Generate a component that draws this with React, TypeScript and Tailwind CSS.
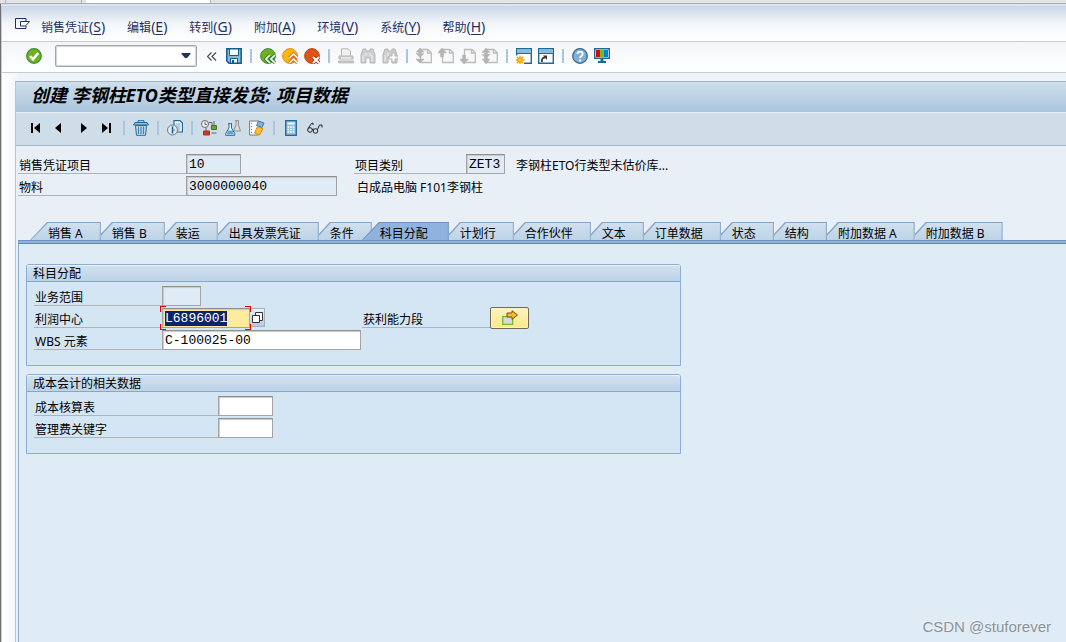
import { useEffect, useRef } from 'react';
import type { ReactNode } from 'react';
import { clsx } from 'clsx';

// ────────────────────────────────────────────
// Data
// ────────────────────────────────────────────

const menus = [
  { label: '销售凭证', hotkey: 'S' },
  { label: '编辑', hotkey: 'E' },
  { label: '转到', hotkey: 'G' },
  { label: '附加', hotkey: 'A' },
  { label: '环境', hotkey: 'V' },
  { label: '系统', hotkey: 'Y' },
  { label: '帮助', hotkey: 'H' },
];

const tabs = [
  '销售 A', '销售 B', '装运', '出具发票凭证', '条件', '科目分配', '计划行',
  '合作伙伴', '文本', '订单数据', '状态', '结构', '附加数据 A', '附加数据 B',
];

const activeTab = '科目分配';

// ────────────────────────────────────────────
// Icons
// ────────────────────────────────────────────

function Icon({ children }: { children: ReactNode }) {
  return (
    <svg width="16" height="16" viewBox="0 0 16 16" fill="none" className="block shrink-0" aria-hidden="true">
      {children}
    </svg>
  );
}

const MenuIcon = (
  <Icon>
    <path d="M11 4V1.5H.5v10H11V9" stroke="#1f3264" />
    <path d="M5.500 4.500h9l-4 4.500h-5z" stroke="#1f3264" fill="#fff" />
  </Icon>
);

const CheckIcon = (
  <Icon>
    <circle cx="8" cy="8" r="7.300" fill="#6fb01e" stroke="#3f8a3c" strokeWidth="1.200" />
    <path d="M4 8l3 3.300L12.200 5" stroke="#fff" strokeWidth="2.600" />
  </Icon>
);

const SaveIcon = (
  <Icon>
    <path d="M.8.8h14.400v14.400H3L.8 13z" fill="#8fb6d6" stroke="#0b5f8f" strokeWidth="1.500" />
    <path d="M3.500 1h9v6.500h-9z" fill="#fff" stroke="#0b5f8f" />
    <path d="M4.500 10.500h7V15h-7z" fill="#fff" stroke="#0b5f8f" />
    <path d="M6 12h2v3H6z" fill="#0b5f8f" />
  </Icon>
);

const BackIcon = (
  <Icon>
    <circle cx="8" cy="8" r="7.400" fill="#6fb01e" stroke="#3f8a3c" />
    <path d="M10 7L6 11l4 4M15 7l-4 4 4 4" stroke="#287a32" strokeWidth="3.200" />
    <path d="M10 7L6 11l4 4M15 7l-4 4 4 4" stroke="#fff" strokeWidth="1.700" />
  </Icon>
);

const ExitIcon = (
  <Icon>
    <circle cx="8" cy="8" r="7.400" fill="#fbb615" stroke="#e58a10" />
    <path d="M7.500 10l4-4 4 4M7.500 15l4-4 4 4" stroke="#d8560c" strokeWidth="3.200" />
    <path d="M7.500 10l4-4 4 4M7.500 15l4-4 4 4" stroke="#fff" strokeWidth="1.700" />
  </Icon>
);

const CancelIcon = (
  <Icon>
    <circle cx="8" cy="8" r="7.400" fill="#dd5318" stroke="#b84a1c" />
    <path d="M9 9l6 6M15 9l-6 6" stroke="#b22d0a" strokeWidth="3.800" />
    <path d="M9 9l6 6M15 9l-6 6" stroke="#fff" strokeWidth="2.100" />
  </Icon>
);

const PrintIcon = (
  <Icon>
    <path d="M3.500 8V.8H10L12.500 3v5" fill="#f1f1f1" stroke="#b5b5b5" />
    <path d="M1 8h14v3H1zM.5 13h15v1.800H.5z" fill="#cdcdcd" stroke="#b5b5b5" />
    <path d="M3 10h10" stroke="#fff" />
  </Icon>
);

const binoculars = 'M3 1h3v2h4V1h3l2 6v8h-5v-5H6v5H1V7z';

const FindIcon = (
  <Icon>
    <path d={binoculars} fill="#cfcfcf" stroke="#b5b5b5" />
    <path d="M3 7v6M12 7v6M6 5v3M10 5v3" stroke="#f2f2f2" />
  </Icon>
);

const FindNextIcon = (
  <Icon>
    <path d={binoculars} fill="#cfcfcf" stroke="#b5b5b5" />
    <path d="M3 7v6M6 5v3" stroke="#f2f2f2" />
    <path d="M10 5h3v3h3v3h-3v3h-3v-3H7V8h3z" fill="#fafafa" stroke="#b5b5b5" />
  </Icon>
);

function PageIcon({ arrow }: { arrow: string }) {
  return (
    <Icon>
      <path d="M4.500 1.500H12l3.300 3.300v9.700H4.500z" fill="#f7f7f7" stroke="#bcbcbc" strokeWidth="1.300" />
      <path d="M11.500 1.500V5h3.500" stroke="#bcbcbc" strokeWidth="1.300" />
      <path d={arrow} fill="#b4b4b4" stroke="#b4b4b4" strokeWidth=".5" />
    </Icon>
  );
}

const NewSessionIcon = (
  <Icon>
    <path d="M.7 .7h14.600v14.600H.7z" fill="#fff" stroke="#22698f" strokeWidth="1.400" />
    <path d="M1.400 1.400h13.200V5H1.400z" fill="#8cb8da" />
    <path d="M1 5.500h14" stroke="#22698f" />
    <path d="M0 7.500h8V16H0z" fill="#fff" />
    <path d="M4 7.500v9M-.5 12h9M.8 8.800l6.400 6.400M7.200 8.800L.8 15.200" stroke="#f19c0d" strokeWidth="1.300" />
    <circle cx="4" cy="12" r="2.300" fill="#ffc71a" stroke="#ef980c" />
  </Icon>
);

const ShortcutIcon = (
  <Icon>
    <path d="M.7 .7h14.600v14.600H.7z" fill="#fff" stroke="#22698f" strokeWidth="1.400" />
    <path d="M1.400 1.400h13.200V5H1.400z" fill="#8cb8da" />
    <path d="M1 5.500h14" stroke="#22698f" />
    <path d="M4 14c-.5-3 .5-4.500 3-4.500" stroke="#333" strokeWidth="1.800" />
    <path d="M5 7.500h4V12z" fill="#333" />
  </Icon>
);

const HelpIcon = (
  <Icon>
    <circle cx="8" cy="8" r="7.300" fill="#82add4" stroke="#2c6690" strokeWidth="1.200" />
    <path d="M5.500 6c0-3.200 5.200-3 5.200 0C10.700 8 8 8 8 10" stroke="#fff" strokeWidth="1.800" />
    <path d="M7 11.500h2v2H7z" fill="#fff" />
  </Icon>
);

const LayoutIcon = (
  <Icon>
    <path d="M.7 .7h14.600v9.600H.7z" fill="#fff" stroke="#22698f" strokeWidth="1.400" />
    <path d="M2 2h4v7H2z" fill="#d20a0a" />
    <path d="M6 2h4v7H6z" fill="#76b82a" />
    <path d="M10 2h4v7h-4z" fill="#0a7fd0" />
    <path d="M6.500 11h3v2h2.500v2H4v-2h2.500z" fill="#22698f" />
  </Icon>
);

const FirstIcon = (
  <Icon>
    <path d="M4 3h2v10H4zM13 3v10L7 8z" fill="#000" />
  </Icon>
);

const PrevIcon = (
  <Icon>
    <path d="M10 3v10L4 8z" fill="#000" />
  </Icon>
);

const NextIcon = (
  <Icon>
    <path d="M6 3v10l6-5z" fill="#000" />
  </Icon>
);

const LastIcon = (
  <Icon>
    <path d="M10 3h2v10h-2zM3 3v10l6-5z" fill="#000" />
  </Icon>
);

const TrashIcon = (
  <Icon>
    <path d="M5 2V.7h6V2" stroke="#1f6c99" />
    <path d="M2 2.500h12l1.500 2.500H.5z" fill="#8fbbdc" stroke="#1f6c99" />
    <path d="M2.500 5.500h11L12.500 15.300h-9z" fill="#c7dcec" stroke="#1f6c99" />
    <path d="M5.500 6.500v7.500M8 6.500v7.500M10.500 6.500v7.500" stroke="#3a82b0" strokeWidth="1.200" />
  </Icon>
);

const HistoryIcon = (
  <Icon>
    <path d="M7 .6h6l2.400 2.400v9H7z" fill="#fff" stroke="#1d6a99" strokeWidth="1.200" />
    <path d="M8.500 4h5M8.500 6h5M8.500 8h5M8.500 10h5" stroke="#6ba3cc" />
    <circle cx="5.500" cy="10" r="5" fill="#e3e9ec" stroke="#6f7a80" />
    <path d="M5.500 6.500v7" stroke="#1d5a88" strokeWidth="1.500" />
    <path d="M5.500 10H8" stroke="#6f7a80" />
  </Icon>
);

const SchedulingIcon = (
  <Icon>
    <circle cx="4" cy="4" r="3.500" fill="#f4f4f4" stroke="#666" />
    <path d="M4 2v2.500H6M8 2.500h3V5M13 1v4M5 8v3" stroke="#666" />
    <path d="M10.500 5.500h5v4h-5z" fill="#63a820" stroke="#4d6e2e" />
    <path d="M2.500 11h6v4h-6z" fill="#d8341c" stroke="#9a3b27" />
    <path d="M10.500 13h5" stroke="#666" />
  </Icon>
);

const FlasksIcon = (
  <Icon>
    <path d="M10 .7h4M11 1v4L8.500 11h7L13.500 5V1" fill="#dadada" stroke="#8b8f92" />
    <path d="M3 3.700h4M4 4v4L.7 13.500v1.800h9v-1.800L6.500 8V4" fill="#fff" stroke="#1d6a99" />
    <path d="M3 10.500h4.500L9 14.500H1.500z" fill="#5fa3d4" />
  </Icon>
);

const EditNotesIcon = (
  <Icon>
    <path d="M.6 1h9v14h-9z" fill="#fff" stroke="#777" />
    <path d="M2.500 3v11" stroke="#777" strokeDasharray="1 2" />
    <path d="M9.500 1l5.500 2-2 4.500-5.500-2z" fill="#7fb2da" stroke="#3b7db0" />
    <path d="M8.500 6.500l5.500 2-3.500 6.500-5-2z" fill="#ffc02a" stroke="#d88b12" />
  </Icon>
);

const CalculatorIcon = (
  <Icon>
    <path d="M2.700 .7h10.600v14.600H2.700z" fill="#8fbbdc" stroke="#1d6a99" strokeWidth="1.300" />
    <path d="M4.500 2.500h7v2h-7z" fill="#fff" />
    <path d="M4.500 7h7M4.500 9.500h7M4.500 12h7" stroke="#fff" strokeWidth="1.500" strokeDasharray="1.800 .8" />
  </Icon>
);

const GlassesIcon = (
  <Icon>
    <circle cx="3" cy="10" r="2.300" stroke="#222" />
    <circle cx="8.500" cy="11" r="2.300" stroke="#222" />
    <path d="M1 8.500L4.500 3.500 6 3v2M5 9.500l1.500-.5M10.500 9.500l2-4.500h2.500v2.500" stroke="#222" />
  </Icon>
);

// ────────────────────────────────────────────
// Small building blocks
// ────────────────────────────────────────────

function ToolButton({ label, children, disabled }: { label: string; children: ReactNode; disabled?: boolean }) {
  return (
    <button type="button" aria-label={label} disabled={disabled} className="size-4 shrink-0">
      {children}
    </button>
  );
}

function Separator() {
  return <span className="h-3.5 w-0.5 shrink-0 bg-[#a9c6e0]" />;
}

const fieldBox =
  'h-5 shrink-0 rounded-none border border-[#a3a3a3] border-t-[#8f8f8f] px-[2px] font-[Liberation_Mono,monospace] text-[13px] leading-4 text-black outline-none shadow-[inset_1px_1px_1px_#c8c8c8]';

function Label({ htmlFor, className, children }: { htmlFor: string; className: string; children: ReactNode }) {
  return (
    <label
      htmlFor={htmlFor}
      className={clsx('flex h-5 shrink-0 items-center border-b border-[#b3b3b3] pt-1 pl-px leading-[15px]', className)}
    >
      {children}
    </label>
  );
}

function Group({ title, children }: { title: string; children: ReactNode }) {
  return (
    <section className="max-w-[655px] rounded-t-[3px] border border-[#8fadd0] bg-[#d4e5f3]">
      <h2 className="flex h-[17px] items-center rounded-t-[2px] border-b border-[#86a5cb] bg-linear-to-b from-[#d3e1ef] to-[#bcd3e9] pt-0.5 pl-1.5 leading-[14px] shadow-[inset_0_1px_0_#eaf2f9]">
        {title}
      </h2>
      <div className="flex flex-col gap-0.5 px-[7px] pt-1 pb-[15px]">{children}</div>
    </section>
  );
}

// ────────────────────────────────────────────
// Menu bar and system toolbar
// ────────────────────────────────────────────

function MenuBar() {
  return (
    <nav className="flex h-9 items-center gap-[22px] border-b border-[#c3ccd6] bg-linear-to-b from-[#c9d6e7] via-[#f3f6fa] via-50% to-white pt-2 pl-[13px] text-[#1f3264]">
      <div className="flex items-center gap-2.5">
        <button type="button" aria-label="菜单" className="mb-1.5">{MenuIcon}</button>
        <MenuEntry {...menus[0]} />
      </div>
      {menus.slice(1).map((menu) => (
        <MenuEntry key={menu.hotkey} {...menu} />
      ))}
    </nav>
  );
}

function MenuEntry({ label, hotkey }: { label: string; hotkey: string }) {
  return (
    <button type="button" className="shrink-0 leading-4 whitespace-nowrap">
      {label}
      <span className="text-sm leading-4">
        (<span className="underline underline-offset-2">{hotkey}</span>)
      </span>
    </button>
  );
}

function SystemToolbar() {
  return (
    <div className="flex h-[31px] items-center gap-1.5 border-b border-[#c3ccd6] bg-linear-to-b from-[#f3f5f9] to-white pb-0.5 pl-6">
      <ToolButton label="回车">{CheckIcon}</ToolButton>
      <div className="relative ml-[7px]">
        <input
          aria-label="命令"
          className="block h-[22px] w-[142px] rounded-xs border border-[#a3a5a9] bg-white px-1 pr-5 shadow-[inset_0_0_1px_1px_#d2d4d8] outline-none"
        />
        <button type="button" aria-label="命令历史" className="absolute top-2 right-1.5">
          <svg width="10" height="6" viewBox="0 0 10 6" className="block" aria-hidden="true">
            <path d="M.5 0h9v1L6 5H4L.5 1z" fill="#1f3264" />
          </svg>
        </button>
      </div>
      <button type="button" aria-label="收起" className="ml-1 mr-[3px] w-[10px] shrink-0">
        <svg width="10" height="9" viewBox="0 0 10 9" fill="none" className="block" aria-hidden="true">
          <path d="M4.500 .5l-4 4 4 4M9 .5l-4 4 4 4" stroke="#4a4a4a" strokeWidth="1.200" />
        </svg>
      </button>
      <div className="flex items-center gap-2">
        <ToolButton label="保存">{SaveIcon}</ToolButton>
        <Separator />
        <div className="flex gap-1.5">
          <ToolButton label="返回">{BackIcon}</ToolButton>
          <ToolButton label="退出">{ExitIcon}</ToolButton>
          <ToolButton label="取消">{CancelIcon}</ToolButton>
        </div>
        <Separator />
        <div className="flex gap-1.5">
          <ToolButton label="打印" disabled>{PrintIcon}</ToolButton>
          <ToolButton label="查找" disabled>{FindIcon}</ToolButton>
          <ToolButton label="查找下一个" disabled>{FindNextIcon}</ToolButton>
        </div>
        <Separator />
        <div className="flex gap-1.5">
          <ToolButton label="首页" disabled>
            <PageIcon arrow="M4 0l4 4H5.500v1.500H8L4 9.500 0 5.500h2.500V4H0zM0 11h8L4 15z" />
          </ToolButton>
          <ToolButton label="上一页" disabled>
            <PageIcon arrow="M4 0l4.500 5H5.500v4h-3V5H-.5z" />
          </ToolButton>
          <ToolButton label="下一页" disabled>
            <PageIcon arrow="M4 16l4.500-5H5.500V7h-3v4H-.5z" />
          </ToolButton>
          <ToolButton label="末页" disabled>
            <PageIcon arrow="M4 0l4 4.500H0zM2.500 5h3v1.500H8L5.500 9v2H8l-4 5-4-5h2.500V9L0 6.500h2.500z" />
          </ToolButton>
        </div>
        <Separator />
        <div className="flex gap-1.5">
          <ToolButton label="新会话">{NewSessionIcon}</ToolButton>
          <ToolButton label="快捷方式">{ShortcutIcon}</ToolButton>
        </div>
        <Separator />
        <div className="flex gap-1.5">
          <ToolButton label="帮助">{HelpIcon}</ToolButton>
          <ToolButton label="布局">{LayoutIcon}</ToolButton>
        </div>
      </div>
    </div>
  );
}

// ────────────────────────────────────────────
// Transaction title and application toolbar
// ────────────────────────────────────────────

function TitleBar() {
  return (
    <header>
      <h1 className="flex h-[31px] items-center border-t border-[#9fb4c9] bg-linear-to-b from-[#cfdfeb] to-[#abc5de] pb-1 pl-[15px] text-lg leading-6 font-bold whitespace-nowrap text-black italic">
        创建 李钢柱ETO类型直接发货: 项目数据
      </h1>
      <div className="flex h-[34px] items-center gap-2 border-t border-b border-t-[#e3edf5] border-b-[#a3b6cb] bg-[#cfdde8] pb-0.5 pl-[11px]">
        <ToolButton label="第一项">{FirstIcon}</ToolButton>
        <ToolButton label="上一项">{PrevIcon}</ToolButton>
        <ToolButton label="下一项">{NextIcon}</ToolButton>
        <ToolButton label="最后一项">{LastIcon}</ToolButton>
        <Separator />
        <ToolButton label="删除">{TrashIcon}</ToolButton>
        <Separator />
        <ToolButton label="凭证流">{HistoryIcon}</ToolButton>
        <Separator />
        <ToolButton label="计划行">{SchedulingIcon}</ToolButton>
        <ToolButton label="配置">{FlasksIcon}</ToolButton>
        <ToolButton label="编辑备注">{EditNotesIcon}</ToolButton>
        <Separator />
        <ToolButton label="定价">{CalculatorIcon}</ToolButton>
        <ToolButton label="显示">{GlassesIcon}</ToolButton>
      </div>
    </header>
  );
}

function ItemHeader() {
  return (
    <div className="flex flex-col gap-0.5 pt-2 pl-0.5">
      <div className="flex">
        <Label htmlFor="item" className="w-[168px]">销售凭证项目</Label>
        <input id="item" readOnly defaultValue="10" className={clsx(fieldBox, 'w-[55px] bg-[#dfebf5]')} />
        <Label htmlFor="category" className="ml-[113px] w-[112px]">项目类别</Label>
        <input id="category" readOnly defaultValue="ZET3" className={clsx(fieldBox, 'w-[39px] bg-[#dfebf5]')} />
        <span className="ml-[11px] pt-1 leading-4 whitespace-nowrap">李钢柱ETO行类型未估价库...</span>
      </div>
      <div className="flex">
        <Label htmlFor="material" className="w-[168px]">物料</Label>
        <input id="material" readOnly defaultValue="3000000040" className={clsx(fieldBox, 'w-[151px] bg-[#dfebf5]')} />
        <span className="ml-5 pt-1 leading-4 whitespace-nowrap">白成品电脑 F101李钢柱</span>
      </div>
    </div>
  );
}

// ────────────────────────────────────────────
// Tab strip
// ────────────────────────────────────────────

function Tab({ label, first }: { label: string; first: boolean }) {
  const active = label === activeTab;
  const wide = first || active;

  return (
    <button
      type="button"
      role="tab"
      aria-selected={active}
      className={clsx(
        'h-[18px] shrink-0 pt-px pr-px',
        wide
          ? '[clip-path:polygon(0_100%,17px_0,100%_0,100%_100%)]'
          : '[clip-path:polygon(0_12px,11px_0,100%_0,100%_100%,0_100%)]',
        active ? 'z-10 -ml-2.5 bg-[#6f94c2]' : 'bg-[#86a5c4]',
      )}
    >
      <span
        className={clsx(
          'flex h-[17px] items-center pt-[5px] leading-3 whitespace-nowrap',
          wide
            ? '[clip-path:polygon(1px_100%,18px_0,100%_0,100%_100%)]'
            : '[clip-path:polygon(0_13px,12px_0,100%_0,100%_100%,0_100%)]',
          wide ? 'pl-[18px]' : 'pl-[11px]',
          active ? 'bg-[#8fb3dd] pr-5' : 'bg-linear-to-b from-[#d0e0ef] to-[#bdd3e7] pr-[17px]',
        )}
      >
        {label}
      </span>
    </button>
  );
}

function TabStrip() {
  return (
    <div role="tablist" className="mt-[26px] flex pl-3">
      {tabs.map((tab, index) => (
        <Tab key={tab} label={tab} first={index === 0} />
      ))}
    </div>
  );
}

// ────────────────────────────────────────────
// Account assignment form
// ────────────────────────────────────────────

function ProfitCenterField() {
  const ref = useRef<HTMLInputElement>(null);

  useEffect(() => {
    ref.current?.focus();
    ref.current?.select();
  }, []);

  return (
    <div className="relative flex">
      <input
        ref={ref}
        id="profit-center"
        defaultValue="L6896001"
        className={clsx(fieldBox, 'w-[88px] bg-[#ffeb9c] selection:bg-[#0a246a] selection:text-white')}
      />
      <button
        type="button"
        aria-label="搜索帮助"
        className="flex h-[19px] w-[15px] items-center justify-center border border-l-0 border-[#a5afba] bg-linear-to-b from-[#eaf1f8] to-[#b3cae4]"
      >
        <svg width="11" height="12" viewBox="0 0 11 12" className="block" aria-hidden="true">
          <path d="M3.500 .5h7v8h-7z" fill="#fff" stroke="#333" />
          <path d="M.5 3.500h7v7h-7z" fill="#fff" stroke="#333" />
        </svg>
      </button>
      {/* focus corners */}
      <span className="pointer-events-none absolute -top-0.5 -left-0.5 size-[6px] border-t border-l border-[#e00000]" />
      <span className="pointer-events-none absolute -bottom-0.5 -left-0.5 size-[6px] border-b border-l border-[#e00000]" />
      <span className="pointer-events-none absolute -top-0.5 left-[83px] size-[6px] border-t border-r border-[#e00000]" />
      <span className="pointer-events-none absolute -bottom-0.5 left-[83px] size-[6px] border-r border-b border-[#e00000]" />
    </div>
  );
}

function AssignmentPanel() {
  return (
    <main className="flex flex-1 flex-col gap-2 border-l border-[#8fadd0] bg-[#dfebf5] px-[7px] pt-5">
      <Group title="科目分配">
        <div className="flex">
          <Label htmlFor="business-area" className="w-32">业务范围</Label>
          <input id="business-area" readOnly className={clsx(fieldBox, 'w-[39px] bg-[#dfebf5]')} />
        </div>
        <div className="flex h-5">
          <Label htmlFor="profit-center" className="w-32">利润中心</Label>
          <ProfitCenterField />
          <Label htmlFor="segment" className="ml-[97px] w-32">获利能力段</Label>
          <button
            id="segment"
            type="button"
            className="-mt-px flex h-[22px] w-[39px] items-center justify-center rounded-xs border border-[#6f6b5c] bg-linear-to-b from-[#fff3bd] to-[#ffe789] shadow-[inset_0_0_0_1px_#fff3c4]"
          >
            <Icon>
              <path d="M.7 6.700h10v7.600H.7z" fill="#d9d9d9" stroke="#76b82a" strokeWidth="1.300" />
              <path d="M5 3h5V.7L15.500 5 10 9.500V7H5z" fill="#ffbb12" stroke="#5c5540" />
            </Icon>
          </button>
        </div>
        <div className="flex">
          <Label htmlFor="wbs" className="w-32">WBS 元素</Label>
          <input id="wbs" defaultValue="C-100025-00" className={clsx(fieldBox, 'w-[199px] bg-white')} />
        </div>
      </Group>
      <Group title="成本会计的相关数据">
        <div className="flex">
          <Label htmlFor="costing-sheet" className="w-[184px]">成本核算表</Label>
          <input id="costing-sheet" className={clsx(fieldBox, 'w-[55px] bg-white')} />
        </div>
        <div className="flex">
          <Label htmlFor="overhead-key" className="w-[184px]">管理费关键字</Label>
          <input id="overhead-key" className={clsx(fieldBox, 'w-[55px] bg-white')} />
        </div>
      </Group>
      <p className="mt-auto self-end pr-2 pb-1 font-[Liberation_Sans,sans-serif] text-[15px] leading-[22px] text-[#8b9299] [text-shadow:-1px_-1px_0_#f2f6fa]">
        CSDN @stuforever
      </p>
    </main>
  );
}

// ────────────────────────────────────────────
// App root
// ────────────────────────────────────────────

export default function App() {
  return (
    <div className="flex min-h-screen flex-col overflow-x-hidden bg-white font-['Noto_Sans','Noto_Sans_CJK_SC',sans-serif] text-xs text-black">
      <div className="flex h-1 border-b border-[#a6afb8] bg-[#e2e4e5] pl-[5px]">
        <span className="w-[77px] border-x border-[#b5b5b5]" />
        <span className="ml-1 w-[125px] border-r border-[#b5b5b5] bg-white" />
      </div>
      <div className="flex flex-1 flex-col border-l border-[#6e6e73]">
        <div className="h-0.5 bg-[#d9e5f1]" />
        <div className="flex flex-1 flex-col border-l border-[#c9ccd1]">
          <MenuBar />
          <SystemToolbar />
          <div className="flex flex-1 flex-col bg-linear-to-r from-white to-[#eef3f9] to-[20px] pt-2 pl-[13px]">
            <div className="flex flex-1 flex-col border-l border-[#b5c5d8] bg-[#e8eff7]">
              <TitleBar />
              <ItemHeader />
              <div className="flex flex-1 flex-col pl-0.5">
                <TabStrip />
                <div className="h-1 border-t border-b border-t-[#6f94c2] border-b-[#6488b5] bg-[#8fb3dd]" />
                <AssignmentPanel />
              </div>
            </div>
          </div>
        </div>
      </div>
    </div>
  );
}
